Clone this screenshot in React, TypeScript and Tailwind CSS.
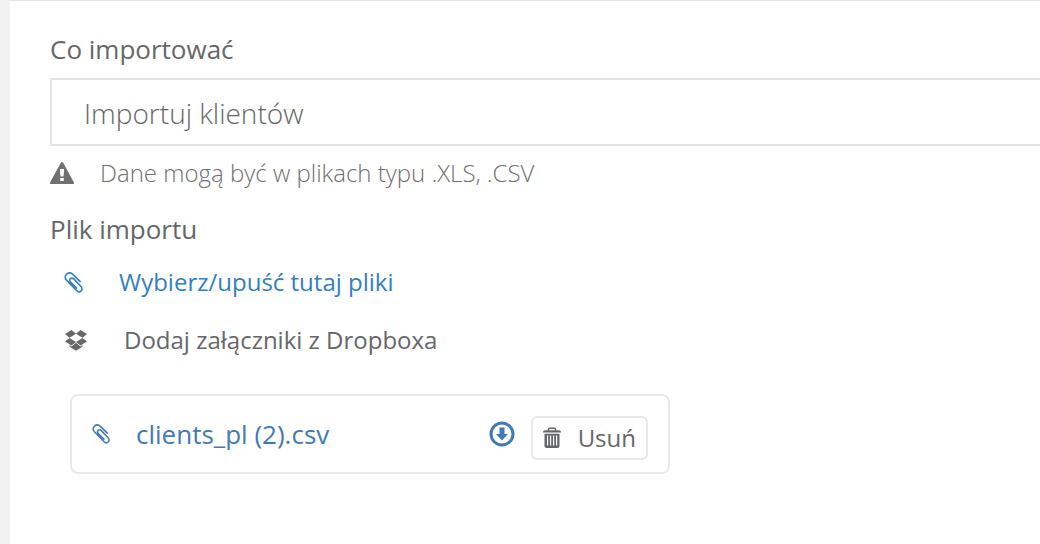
import { useState } from 'react'

type IconProps = { className?: string }

const WarningIcon = ({ className }: IconProps) => (
  <svg viewBox="0 0 24 22" className={className} fill="currentColor" aria-hidden="true">
    <path
      fillRule="evenodd"
      d="M12 0c.5 0 .9.3 1.2.8l10.6 19.4c.5.9 0 1.8-1 1.8H1.2c-1 0-1.5-.9-1-1.8L10.8.8c.3-.5.7-.8 1.2-.8ZM10 7v3l.6 4.500h2.800L14 10V7h-4Zm.2 9v3h3.600v-3h-3.600Z"
    />
  </svg>
)

const PaperclipIcon = ({ className }: IconProps) => (
  <svg
    viewBox="0 0 20 22"
    className={className}
    fill="none"
    stroke="currentColor"
    strokeWidth="1.7"
    strokeLinecap="round"
    strokeLinejoin="round"
    aria-hidden="true"
  >
    <path d="M17 10 9.300 2.500C7.200.5 4.500.6 2.800 2.200 1 3.800.7 6.300 2.400 8.200l10.800 11.200c1.500 1.600 3.500 1.700 4.800.5s1.300-3.200-.1-4.700L10.600 7.500C9.300 6.200 7.800 6.100 6.800 7s-1 2.300.2 3.600l6.300 6.300" />
  </svg>
)

const DropboxIcon = ({ className }: IconProps) => (
  <svg viewBox="0 0 22 21" className={className} fill="currentColor" aria-hidden="true">
    <path d="M6.500 0 11 3.700 4.500 7.700 0 4.100ZM15.500 0 22 4.100l-4.500 3.600L11 3.700ZM0 11.500l4.500-3.600L11 11.900 6.500 15.600ZM22 11.500l-4.500-3.600L11 11.900l4.500 3.700ZM11 12.800l4.500 3.700 2-1.200v1.500L11 20.700l-6.500-3.900v-1.500l2 1.200Z" />
  </svg>
)

const DownloadIcon = ({ className }: IconProps) => (
  <svg viewBox="0 0 26 26" className={className} aria-hidden="true">
    <circle cx="13" cy="13" r="11" fill="none" stroke="currentColor" strokeWidth="3" />
    <path d="M10.500 6.500h5V13h3.500L13 19.500 7 13h3.500Z" fill="currentColor" />
  </svg>
)

const TrashIcon = ({ className }: IconProps) => (
  <svg viewBox="0 0 20 22" className={className} fill="currentColor" aria-hidden="true">
    <path d="M6.500 4V2.300c0-.6.4-1 1-1h5c.6 0 1 .4 1 1V4" fill="none" stroke="currentColor" strokeWidth="1.500" />
    <path d="M1 5.600c0-1.500.8-2.300 2.200-2.300h13.600c1.400 0 2.200.8 2.200 2.300Z" />
    <path
      fillRule="evenodd"
      d="M2.500 6.800h15v12c0 1.500-.8 2.200-2.300 2.200H4.800c-1.500 0-2.300-.7-2.300-2.200ZM5 8.500v10h1.200v-10Zm3 0v10h1.200v-10Zm3 0v10h1.200v-10Zm3 0v10h1.200v-10Z"
    />
  </svg>
)

export default function App() {
  const [files, setFiles] = useState(['clients_pl (2).csv'])

  return (
    <div className="min-h-screen overflow-hidden bg-[#f2f2f2] pl-2.5 font-['Open_Sans',sans-serif] text-[#666769]">
      <main className="min-h-screen border-t border-[#e3e3e3] bg-white pt-8 pb-16 pl-10">
        {/* Import type */}
        <label htmlFor="import-type" className="block text-[26px] leading-8">
          Co importować
        </label>
        <select
          id="import-type"
          className="mt-[13px] block h-17 w-full appearance-none rounded-l-xs border-2 border-r-0 border-[#e3e3e3] bg-white pt-0.5 pl-8 text-[28px] font-light"
        >
          <option>Importuj klientów</option>
        </select>
        <p className="mt-[11px] flex items-center gap-[26px] text-2xl leading-8 font-light text-[#707070]">
          <WarningIcon className="h-[22px] w-6 shrink-0" />
          Dane mogą być w plikach typu .XLS, .CSV
        </p>

        {/* File sources */}
        <h2 className="mt-6 text-[26px] leading-8">Plik importu</h2>
        <div className="mt-[21px] flex flex-col items-start gap-[26px] pl-3.5 text-2xl leading-8">
          <label className="flex cursor-pointer items-center gap-9 text-[#337fbf]">
            <input type="file" className="sr-only" />
            <PaperclipIcon className="h-[21px] w-[19px]" />
            Wybierz/upuść tutaj pliki
          </label>
          <button type="button" className="flex items-center gap-9">
            <DropboxIcon className="h-[21px] w-6" />
            Dodaj załączniki z Dropboxa
          </button>
        </div>

        {/* Attached files */}
        <ul className="mt-[38px] ml-5 max-w-[600px] space-y-4">
          {files.map((file) => (
            <li key={file} className="flex h-20 items-center rounded-lg border-2 border-[#e8e9e9] px-5">
              <a href="#file" className="flex items-center gap-[26px] text-[26px] leading-8 text-[#427ab5]">
                <PaperclipIcon className="h-5 w-[18px]" />
                {file}
              </a>
              <a href="#download" aria-label="Pobierz" className="ml-auto text-[#427ab5]">
                <DownloadIcon className="size-[26px]" />
              </a>
              <button
                type="button"
                className="mt-2 ml-4 flex h-11 items-center gap-4 rounded-md border-2 border-[#e8e8e8] pr-2.5 pl-[9px] text-2xl"
                onClick={() => setFiles(files.filter((f) => f !== file))}
              >
                <TrashIcon className="h-[22px] w-5" />
                Usuń
              </button>
            </li>
          ))}
        </ul>
      </main>
    </div>
  )
}
